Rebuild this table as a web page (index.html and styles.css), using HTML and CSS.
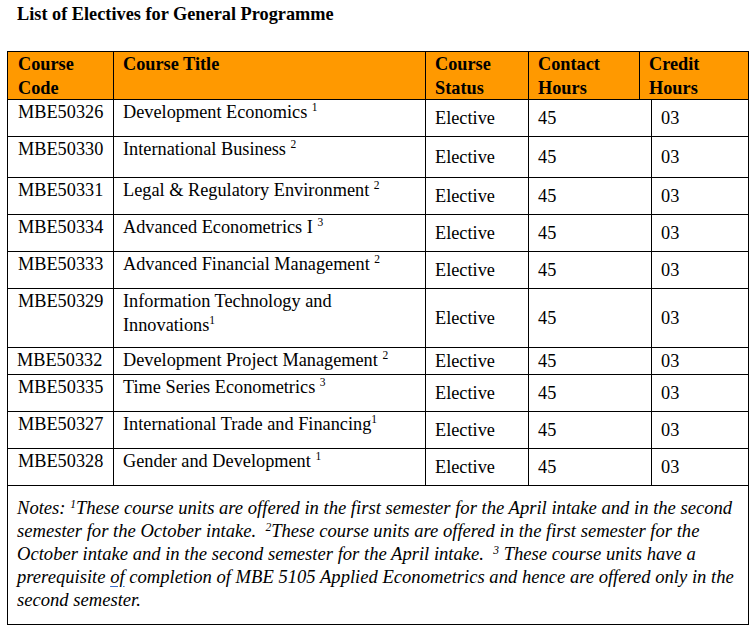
FILE: index.html
```html
<!DOCTYPE html>
<html>
<head>
<meta charset="utf-8">
<link rel="stylesheet" href="styles.css">
</head>
<body>
<div class="page">
  <h1 class="title">List of Electives for General Programme</h1>
  <div class="table">
    <div class="th c1">Course<br>Code</div>
    <div class="th c2">Course Title</div>
    <div class="th c3">Course<br>Status</div>
    <div class="th c4h">Contact<br>Hours</div>
    <div class="th c5h">Credit<br>Hours</div>

    <div class="td c1">MBE50326</div>
    <div class="td c2">Development Economics <sup>1</sup></div>
    <div class="td c3 mid">Elective</div>
    <div class="td c4 mid">45</div>
    <div class="td c5 mid">03</div>

    <div class="td c1">MBE50330</div>
    <div class="td c2">International Business <sup>2</sup></div>
    <div class="td c3 mid">Elective</div>
    <div class="td c4 mid">45</div>
    <div class="td c5 mid">03</div>

    <div class="td c1">MBE50331</div>
    <div class="td c2">Legal &amp; Regulatory Environment <sup>2</sup></div>
    <div class="td c3 mid">Elective</div>
    <div class="td c4 mid">45</div>
    <div class="td c5 mid">03</div>

    <div class="td c1">MBE50334</div>
    <div class="td c2">Advanced Econometrics I <sup>3</sup></div>
    <div class="td c3 mid">Elective</div>
    <div class="td c4 mid">45</div>
    <div class="td c5 mid">03</div>

    <div class="td c1">MBE50333</div>
    <div class="td c2">Advanced Financial Management <sup>2</sup></div>
    <div class="td c3 mid">Elective</div>
    <div class="td c4 mid">45</div>
    <div class="td c5 mid">03</div>

    <div class="td c1">MBE50329</div>
    <div class="td c2">Information Technology and<br>Innovations<sup>1</sup></div>
    <div class="td c3 mid">Elective</div>
    <div class="td c4 mid">45</div>
    <div class="td c5 mid">03</div>

    <div class="td c1 tight">MBE50332</div>
    <div class="td c2">Development Project Management <sup>2</sup></div>
    <div class="td c3 mid">Elective</div>
    <div class="td c4 mid">45</div>
    <div class="td c5 mid">03</div>

    <div class="td c1">MBE50335</div>
    <div class="td c2">Time Series Econometrics <sup>3</sup></div>
    <div class="td c3 mid">Elective</div>
    <div class="td c4 mid">45</div>
    <div class="td c5 mid">03</div>

    <div class="td c1">MBE50327</div>
    <div class="td c2">International Trade and Financing<sup>1</sup></div>
    <div class="td c3 mid">Elective</div>
    <div class="td c4 mid">45</div>
    <div class="td c5 mid">03</div>

    <div class="td c1">MBE50328</div>
    <div class="td c2">Gender and Development <sup>1</sup></div>
    <div class="td c3 mid">Elective</div>
    <div class="td c4 mid">45</div>
    <div class="td c5 mid">03</div>

    <div class="notes">
      <span class="line">Notes: <sup>1</sup>These course units are offered in the first semester for the April intake and in the second</span>
      <span class="line">semester for the October intake. &nbsp;<sup>2</sup>These course units are offered in the first semester for the</span>
      <span class="line">October intake and in the second semester for the April intake. &nbsp;<sup>3</sup> These course units have a</span>
      <span class="line">prerequisite <span class="gram">of</span> completion of MBE 5105 Applied Econometrics and hence are offered only in the</span>
      <span class="line">second semester.</span>
    </div>
  </div>
</div>
</body>
</html>
```

FILE: styles.css
```css
html, body {
  margin: 0;
  padding: 0;
  background: #ffffff;
}

body {
  font-family: "Liberation Serif", "Times New Roman", serif;
  color: #000000;
  font-size: 18.3px;
}

.page {
  padding: 2px 0 0 7px;
}

.title {
  margin: 0 0 25px 10px;
  font-size: 18.3px;
  line-height: 24px;
  font-weight: bold;
}

.table {
  display: grid;
  width: 740px;
  padding: 1px;
  gap: 1px;
  background: #000000;
  grid-template-columns: 105px 311px 102px 110px 11px 96px;
  grid-template-rows: 47px 36px 40px 36px 36px 36px 58px 26px 36px 36px 36px 138px;
}

.th,
.td {
  padding: 0 0 0 9px;
  line-height: 24px;
  white-space: nowrap;
}

.th {
  background: #ff9900;
  font-weight: bold;
}

.td {
  background: #ffffff;
}

.c1 { grid-column: 1; }
.c2 { grid-column: 2; }
.c3 { grid-column: 3; }
.c4h { grid-column: 4; }
.c5h { grid-column: 5 / 7; }
.c4 { grid-column: 4 / 6; }
.c5 { grid-column: 6; }

.c1 { padding-left: 10px; }
.c1.tight { padding-left: 9px; }

.mid {
  display: flex;
  align-items: center;
}

.c5 { padding-left: 9px; }

sup {
  font-size: 11.5px;
  line-height: 0;
  vertical-align: 7px;
}

.notes {
  grid-column: 1 / 7;
  background: #ffffff;
  padding: 10px 0 0 9px;
  font-style: italic;
  font-size: 18.6px;
  line-height: 23px;
  white-space: nowrap;
}

.notes .line {
  display: block;
}

.notes sup {
  vertical-align: 6px;
}

.gram {
  text-decoration: underline;
  text-decoration-color: #3b6fd0;
  text-underline-offset: 3px;
}
```
